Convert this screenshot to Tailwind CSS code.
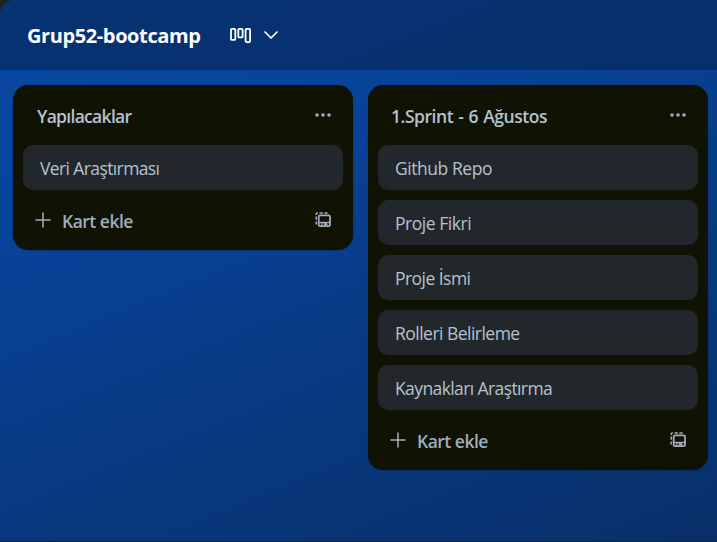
<!DOCTYPE html>
<html lang="tr">
<head>
<meta charset="utf-8">
<title>Grup52-bootcamp</title>
<script src="https://cdn.jsdelivr.net/npm/@tailwindcss/browser@4"></script>
</head>
<body class="h-[542px] w-[717px] overflow-hidden bg-[#1d2125] font-['Open_Sans','Noto_Sans',sans-serif]">
<svg class="hidden">
  <symbol id="dots" viewBox="0 0 20 20"><g fill="currentColor"><circle cx="4" cy="10" r="1.800"/><circle cx="10" cy="10" r="1.800"/><circle cx="16" cy="10" r="1.800"/></g></symbol>
  <symbol id="plus" viewBox="0 0 20 20"><path d="M10 3v14M3 10h14" stroke="currentColor" stroke-width="1.500" stroke-linecap="round"/></symbol>
  <symbol id="template" viewBox="0 0 20 20"><g fill="none" stroke="currentColor"><path d="M3.200 5V4.200a1 1 0 0 1 1-1.200H5M6.600 3h3.200M11.400 3h3.200M3.200 6.600v3.200M3.200 11.400v3" stroke-width="1.500"/><rect x="5.700" y="5.400" width="11.300" height="10.700" rx="1.300" stroke-width="1.800"/><path d="M6 12.500h11" stroke-width="1.400"/><path d="M12 14.300h2.500M8.800 13v3" stroke-width="1.200"/><path d="M10.800 14.300h3" stroke-width="2.600"/></g></symbol>
</svg>
<div class="flex h-full flex-col rounded-tl-[15px] border-b border-[#062553] bg-[linear-gradient(158deg,#0849a2_0%,#08439a_28%,#083a82_60%,#082f69_100%)]">
  <header class="flex h-[70px] shrink-0 items-center rounded-tl-[15px] bg-[#062553]/60 pl-[27px] text-white">
    <h1 class="w-[203px] whitespace-nowrap pt-0.5 text-[20px] font-bold tracking-[-0.4px]">Grup52-bootcamp</h1>
    <svg class="h-5 w-[22px]" viewBox="0 0 22 20" fill="none" stroke="currentColor" stroke-width="1.800"><rect x="1" y="3.900" width="4.300" height="11" rx="1"/><rect x="8.300" y="3.900" width="4.300" height="8.500" rx="1"/><rect x="15.600" y="3.900" width="4.500" height="13.200" rx="1"/></svg>
    <svg class="ml-3 size-4" viewBox="0 0 16 16" fill="none" stroke="currentColor" stroke-width="1.700" stroke-linecap="round" stroke-linejoin="round"><path d="M1 5l6 6 6-6"/></svg>
  </header>
  <main class="flex items-start gap-[15px] pt-[15px] pl-[13px]">
    <section class="w-[340px] shrink-0 rounded-[15px] bg-[#101204] px-2.5 shadow-[0_1px_1px_#091e4240,0_0_1px_#091e424f]">
      <div class="flex h-[60px] items-center justify-between pr-2.5 pl-3.5 text-[#b6c2cf]">
        <h2 class="whitespace-nowrap pt-0.5 text-[17.5px] font-semibold tracking-[-0.7px]">Yapılacaklar</h2>
        <svg class="size-5 text-[#9fadbc]"><use href="#dots"/></svg>
      </div>
      <ul>
        <li class="flex h-[45px] items-center whitespace-nowrap rounded-[10px] bg-[#22272b] px-[17px] pt-0.5 text-[17.5px] tracking-[-0.61px] text-[#b6c2cf]">Veri Araştırması</li>
      </ul>
      <div class="flex h-[60px] items-center pr-2.5 pl-2.5 text-[#9fadbc]">
        <svg class="size-5"><use href="#plus"/></svg>
        <span class="ml-[9px] grow whitespace-nowrap pt-[3px] text-[17.5px] font-semibold tracking-[-0.5px]">Kart ekle</span>
        <svg class="size-5"><use href="#template"/></svg>
      </div>
    </section>
    <section class="w-[340px] shrink-0 rounded-[15px] bg-[#101204] px-2.5 shadow-[0_1px_1px_#091e4240,0_0_1px_#091e424f]">
      <div class="flex h-[60px] items-center justify-between pr-2.5 pl-[13px] text-[#b6c2cf]">
        <h2 class="whitespace-nowrap pt-0.5 text-[17.5px] font-semibold tracking-[-0.45px] [word-spacing:1px]">1.Sprint - 6 Ağustos</h2>
        <svg class="size-5 text-[#9fadbc]"><use href="#dots"/></svg>
      </div>
      <ul class="flex flex-col gap-2.5 text-[17.5px] text-[#b6c2cf]">
        <li class="flex h-[45px] items-center whitespace-nowrap rounded-[10px] bg-[#22272b] px-[17px] pt-0.5 tracking-[-0.45px]">Github Repo</li>
        <li class="flex h-[45px] items-center whitespace-nowrap rounded-[10px] bg-[#22272b] px-[17px] pt-0.5 tracking-[-0.46px]">Proje Fikri</li>
        <li class="flex h-[45px] items-center whitespace-nowrap rounded-[10px] bg-[#22272b] px-[17px] pt-0.5 tracking-[-0.54px]">Proje İsmi</li>
        <li class="flex h-[45px] items-center whitespace-nowrap rounded-[10px] bg-[#22272b] px-[17px] pt-0.5 tracking-[-0.52px]">Rolleri Belirleme</li>
        <li class="flex h-[45px] items-center whitespace-nowrap rounded-[10px] bg-[#22272b] px-[17px] pt-0.5 tracking-[-0.6px]">Kaynakları Araştırma</li>
      </ul>
      <div class="flex h-[60px] items-center pr-2.5 pl-2.5 text-[#9fadbc]">
        <svg class="size-5"><use href="#plus"/></svg>
        <span class="ml-[9px] grow whitespace-nowrap pt-[3px] text-[17.5px] font-semibold tracking-[-0.5px]">Kart ekle</span>
        <svg class="size-5"><use href="#template"/></svg>
      </div>
    </section>
  </main>
</div>
</body>
</html>
